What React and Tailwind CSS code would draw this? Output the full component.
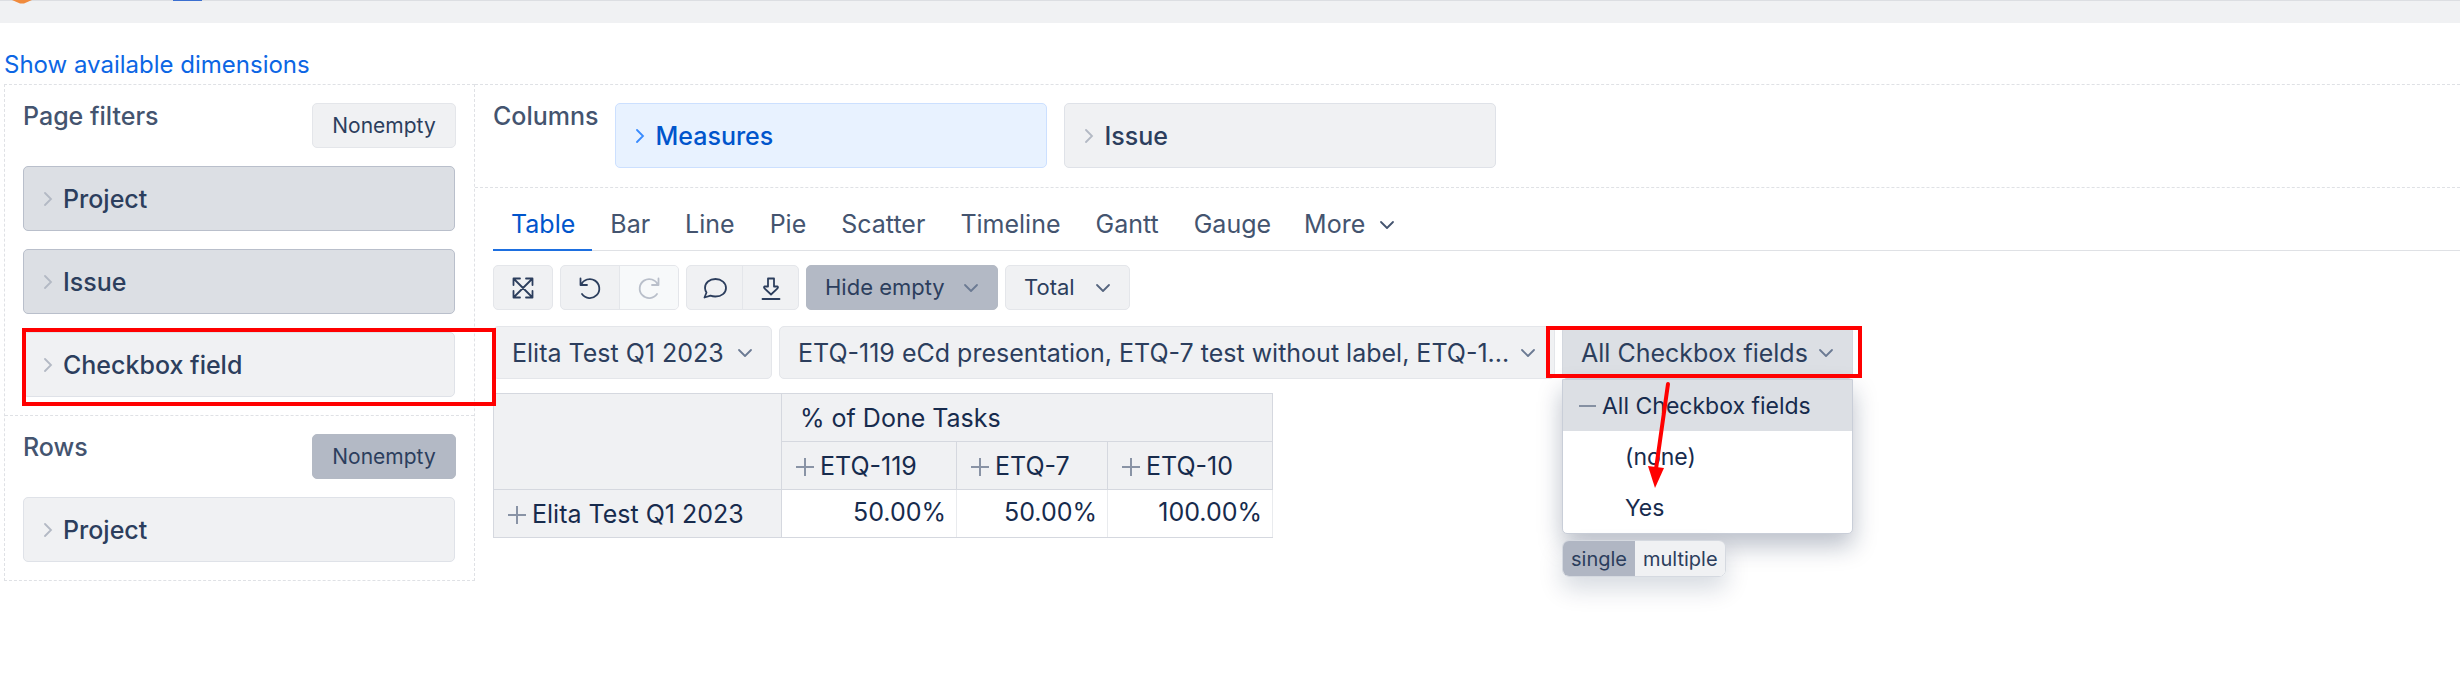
import React, { useState } from 'react'
import clsx from 'clsx'

const charts = ['Table', 'Bar', 'Line', 'Pie', 'Scatter', 'Timeline', 'Gantt', 'Gauge']

const pageDimensions = [
  { name: 'Project', tone: 'dark' },
  { name: 'Issue', tone: 'dark' },
  { name: 'Checkbox field', tone: 'light', marked: true },
]

const issues = [
  { key: 'ETQ-119', value: '50.00%' },
  { key: 'ETQ-7', value: '50.00%' },
  { key: 'ETQ-10', value: '100.00%' },
]

function Chevron({ className }) {
  return (
    <svg viewBox="0 0 16 10" className={clsx('h-[10px] w-4 shrink-0', className)} fill="none" stroke="currentColor" strokeWidth="1.8">
      <path d="M2 2l6 6 6-6" strokeLinecap="round" strokeLinejoin="round" />
    </svg>
  )
}

function Plus() {
  return (
    <svg viewBox="0 0 18 18" className="h-[18px] w-[18px] shrink-0 text-[#8993a5]" fill="none" stroke="currentColor" strokeWidth="2">
      <path d="M9 0v18M0 9h18" />
    </svg>
  )
}

function ToolIcon({ children }) {
  return (
    <svg viewBox="0 0 24 24" className="h-6 w-6" fill="none" stroke="currentColor" strokeWidth="1.8" strokeLinecap="round" strokeLinejoin="round">
      {children}
    </svg>
  )
}

function Dimension({ name, tone, marked, className }) {
  return (
    <div className={clsx('relative', className)}>
      <button
        type="button"
        className={clsx(
          'flex h-[65px] w-full items-center gap-[10px] rounded-[5px] border px-5 text-left text-[25px] font-medium',
          tone === 'dark' && 'border-[#b9bfcb] bg-[#dcdfe4] text-[#2c3e5d]',
          tone === 'light' && 'border-[#dfe2e8] bg-[#f0f1f3] text-[#2c3e5d]',
          tone === 'blue' && 'border-[#cce0ff] bg-[#e8f2ff] text-[#0055cc]'
        )}
      >
        <svg
          viewBox="0 0 9 14"
          className={clsx('h-[14px] w-[9px] shrink-0', tone === 'blue' ? 'text-[#388bff]' : 'text-[#b3b9c4]')}
          fill="none"
          stroke="currentColor"
          strokeWidth="1.8"
        >
          <path d="M1 1l6 6-6 6" strokeLinecap="round" />
        </svg>
        <span className="pt-[2px]">{name}</span>
      </button>
      {marked && <div className="pointer-events-none absolute -left-px -right-[41px] -top-1 z-10 h-[78px] border-4 border-[#ff0000]" />}
    </div>
  )
}

function Nonempty({ active }) {
  return (
    <button
      type="button"
      aria-pressed={!!active}
      className={clsx(
        'h-[45px] w-36 rounded-[5px] border text-[21px] text-[#2c3e5d]',
        active ? 'border-[#b3b9c4] bg-[#b3b9c5]' : 'border-[#e4e6ea] bg-[#f0f1f3]'
      )}
    >
      Nonempty
    </button>
  )
}

function PageSelect({ label, className, open, onClick }) {
  return (
    <button
      type="button"
      onClick={onClick}
      className={clsx(
        'flex h-[53px] items-center justify-between rounded-[5px] border px-[18px] text-[25px] text-[#2c3e5d]',
        open ? 'border-[#d3d7de] bg-[#dcdfe4]' : 'border-[#e4e6ea] bg-[#f0f1f3]',
        className
      )}
    >
      <span className="whitespace-nowrap pt-[2px]">{label}</span>
      <Chevron className="text-[#6b7a93]" />
    </button>
  )
}

function Toolbar() {
  const tool = 'flex h-full items-center justify-center'
  const group = 'flex h-[45px] overflow-hidden rounded-[5px] border border-[#e4e6ea] bg-[#f0f1f3] text-[#2c3e5d]'
  return (
    <div className="mt-[14px] flex gap-[7px]">
      <div className={clsx(group, 'w-[60px]')}>
        <button type="button" aria-label="Full screen" className={clsx(tool, 'flex-1')}>
          <ToolIcon>
            <path d="M3 3l18 18M21 3L3 21M2.500 9V2.500H9M15 2.500h6.500V9M21.500 15v6.500H15M9 21.500H2.500V15" />
          </ToolIcon>
        </button>
      </div>
      <div className={clsx(group, 'w-[119px]')}>
        <button type="button" aria-label="Undo" className={clsx(tool, 'flex-1')}>
          <ToolIcon>
            <path d="M2.500 2.500v6.500H9M3 9a9.500 9.500 0 1 1 1 9" />
          </ToolIcon>
        </button>
        <button type="button" aria-label="Redo" disabled className={clsx(tool, 'flex-1 border-l border-[#e4e6ea] bg-[#f7f9fa] text-[#b9bfca]')}>
          <ToolIcon>
            <path d="M21.500 2.500v6.500H15M21 9a9.500 9.500 0 1 0-1 9" />
          </ToolIcon>
        </button>
      </div>
      <div className={clsx(group, 'w-[113px]')}>
        <button type="button" aria-label="Comment" className={clsx(tool, 'flex-1')}>
          <ToolIcon>
            <path d="M1.500 21.500l2-5A8.500 8.500 0 0 1 2 12C2 6.500 6.500 3 12.500 3S23 7 23 12s-4.500 8.500-10.500 8.500a14 14 0 0 1-5-.8z" />
          </ToolIcon>
        </button>
        <button type="button" aria-label="Export" className={clsx(tool, 'flex-1 border-l border-[#e4e6ea]')}>
          <ToolIcon>
            <path d="M9 2.500h6v8h3.500q1 .8 0 1.800L12 18.500l-6.500-6.200q-1-1 0-1.800H9zM3.500 23h17" />
          </ToolIcon>
        </button>
      </div>
      <button type="button" className="flex h-[45px] w-[192px] items-center justify-between rounded-[5px] border border-[#b3b9c4] bg-[#b3b9c5] px-[18px] text-[22px] text-[#2c3e5d]">
        Hide empty
        <Chevron className="text-[#6b7a93]" />
      </button>
      <button type="button" className="flex h-[45px] w-[125px] items-center justify-between rounded-[5px] border border-[#e4e6ea] bg-[#f0f1f3] px-[18px] text-[22px] text-[#2c3e5d]">
        Total
        <Chevron className="text-[#56657f]" />
      </button>
    </div>
  )
}

function CheckboxFieldPage() {
  const [open, setOpen] = useState(true)
  const [mode, setMode] = useState('single')
  const item = 'flex w-full items-center pt-px text-left text-[23px] text-[#172b4d]'

  return (
    <div className="relative">
      <PageSelect label="All Checkbox fields" className="w-[291px]" open={open} onClick={() => setOpen(!open)} />
      <div className="pointer-events-none absolute -right-[9px] top-0 left-[-16px] z-20 h-[52px] border-4 border-[#ff0000]" />
      {open && (
        <div className="absolute left-0 top-full z-10 w-full">
          <div role="menu" className="overflow-hidden rounded-b-[5px] border border-[#c9ced8] bg-white shadow-[0_12px_24px_rgba(9,30,66,0.28)]">
            <button type="button" role="menuitem" className={clsx(item, 'h-[51px] gap-[6px] bg-[#dcdfe4] pl-4')}>
              <span className="h-[2px] w-[17px] bg-[#8590a2]" />
              All Checkbox fields
            </button>
            <button type="button" role="menuitem" className={clsx(item, 'h-[51px] pl-[62px]')}>(none)</button>
            <button type="button" role="menuitem" className={clsx(item, 'h-[51px] pl-[62px]')}>Yes</button>
          </div>
          <div className="mt-[6px] flex h-[37px] w-[164px] overflow-hidden rounded-[7px] border border-[#d5d9e0] text-[20px] text-[#2c3e5d] shadow-[0_12px_24px_rgba(9,30,66,0.16)]">
            {['single', 'multiple'].map((name) => (
              <button
                key={name}
                type="button"
                aria-pressed={mode === name}
                onClick={() => setMode(name)}
                className={clsx('px-2', mode === name ? 'bg-[#b0b6c3]' : 'flex-1 bg-[#f0f1f3]')}
              >
                {name}
              </button>
            ))}
          </div>
          {/* Arrow to the Yes member */}
          <svg viewBox="0 0 26 110" className="pointer-events-none absolute left-[84px] top-[2px] z-20 h-[110px] w-[26px]" fill="none">
            <path d="M22 3L10 88" stroke="#ff0000" strokeWidth="4" strokeLinecap="round" />
            <path d="M2 85l16 2-9 20z" fill="#ff0000" />
          </svg>
        </div>
      )}
    </div>
  )
}

function ResultTable() {
  const head = 'border border-[#d5d8df] bg-[#f0f1f3] pt-[2px] text-left font-normal'
  return (
    <table className="mt-[14px] w-[780px] table-fixed border-collapse text-[25px] text-[#172b4d]">
      <colgroup>
        <col className="w-[288px]" />
        <col className="w-[175px]" />
        <col className="w-[151px]" />
        <col />
      </colgroup>
      <thead>
        <tr className="h-12">
          <th rowSpan={2} className={head} />
          <th colSpan={3} className={clsx(head, 'pl-[18px]')}>% of Done Tasks</th>
        </tr>
        <tr className="h-12">
          {issues.map((issue) => (
            <th key={issue.key} className={clsx(head, 'pl-[14px]')}>
              <span className="flex items-center gap-[6px]">
                <Plus />
                {issue.key}
              </span>
            </th>
          ))}
        </tr>
      </thead>
      <tbody>
        <tr className="h-12">
          <th className={clsx(head, 'pl-[14px]')}>
            <span className="flex items-center gap-[6px]">
              <Plus />
              Elita Test Q1 2023
            </span>
          </th>
          {issues.map((issue) => (
            <td key={issue.key} className="border border-[#e9ebee] border-b-[#d5d8df] pb-px pr-[10px] text-right">
              {issue.value}
            </td>
          ))}
        </tr>
      </tbody>
    </table>
  )
}

export default function App() {
  const [chart, setChart] = useState('Table')

  return (
    <div className="min-h-screen bg-white font-['Inter',sans-serif]">
      {/* Bottom of the app header */}
      <div className="flex h-[23px] items-start border-t border-[#dcdee2] bg-[#f0f1f3]">
        <svg viewBox="0 0 20 4" className="-mt-px ml-3 h-1 w-5">
          <path d="M0 0h20l-8 3.500h-4z" fill="#f08a3c" />
        </svg>
        <div className="-mt-px ml-[141px] h-[1px] w-[29px] bg-[#3b6fd0]" />
      </div>

      <div className="flex h-[61px] items-end pb-px pl-1">
        <a href="#dimensions" className="text-[24px] text-[#0c66e4]">Show available dimensions</a>
      </div>

      <div className="flex items-start pl-1">
        {/* Sidebar */}
        <aside className="w-[471px] shrink-0 border border-dashed border-[#dfe1e5]">
          <section className="border-b border-dashed border-[#dfe1e5] px-[18px] pb-[18px] pt-[18px]">
            <div className="flex justify-between">
              <h2 className="text-[25px] font-medium leading-[26px] text-[#44546f]">Page filters</h2>
              <Nonempty />
            </div>
            <div className="mt-[18px] flex w-[432px] flex-col gap-[18px]">
              {pageDimensions.map((dimension) => (
                <Dimension key={dimension.name} {...dimension} />
              ))}
            </div>
          </section>
          <section className="px-[18px] pb-[18px] pt-[18px]">
            <div className="flex justify-between">
              <h2 className="text-[25px] font-medium leading-[26px] text-[#44546f]">Rows</h2>
              <Nonempty active />
            </div>
            <Dimension name="Project" tone="light" className="mt-[18px] w-[432px]" />
          </section>
        </aside>

        {/* Report */}
        <main className="min-w-0 flex-1">
          <section className="flex h-[104px] gap-[17px] border-y border-dashed border-[#dfe1e5] pl-[18px] pt-[18px]">
            <h2 className="text-[25px] font-medium leading-[26px] text-[#44546f]">Columns</h2>
            <Dimension name="Measures" tone="blue" className="w-[432px]" />
            <Dimension name="Issue" tone="light" className="w-[432px]" />
          </section>

          <div className="pl-[18px]">
            <nav className="mt-[10px] flex h-[53px] border-b border-[#dfe1e5] text-[25px] text-[#44546f]">
              {charts.map((name) => (
                <button
                  key={name}
                  type="button"
                  onClick={() => setChart(name)}
                  className={clsx('-mb-px border-b-2 pl-[18px] pr-[17px] pt-[2px]', chart === name ? 'border-[#1d6fe0] text-[#0055cc]' : 'border-transparent')}
                >
                  {name}
                </button>
              ))}
              <button type="button" className="flex items-center gap-[14px] px-4 pt-px">
                More
                <Chevron />
              </button>
            </nav>

            <Toolbar />

            <div className="mt-4 flex gap-[7px]">
              <PageSelect label="Elita Test Q1 2023" className="w-[279px]" />
              <PageSelect label="ETQ-119 eCd presentation, ETQ-7 test without label, ETQ-1..." className="w-[776px]" />
              <CheckboxFieldPage />
            </div>

            <ResultTable />
          </div>
        </main>
      </div>
    </div>
  )
}
